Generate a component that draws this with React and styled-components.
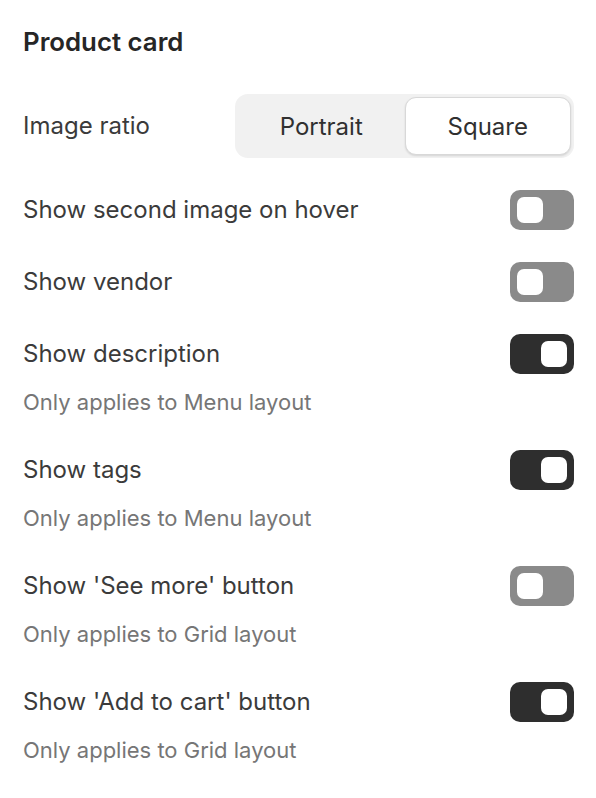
import React, { useState } from 'react';
import styled, { createGlobalStyle } from 'styled-components';

const GlobalStyle = createGlobalStyle`
  body {
    margin: 0;
    background: #ffffff;
    font-family: Inter, "Noto Sans", sans-serif;
    -webkit-font-smoothing: antialiased;
  }
`;

const Panel = styled.div`
  padding: 28px 22px 40px 23px;
  display: flex;
  flex-direction: column;
`;

const Title = styled.h2`
  margin: 0 0 38px;
  font-size: 25.8px;
  line-height: 28px;
  font-weight: 600;
  color: #262626;
`;

const List = styled.div`
  display: flex;
  flex-direction: column;
  gap: 32px;
`;

const Row = styled.div`
  display: flex;
  align-items: center;
  justify-content: space-between;
  min-height: 40px;
`;

const Label = styled.span`
  font-size: 24px;
  line-height: 28px;
  color: #3b3b3b;
`;

const Hint = styled.div`
  padding: 16px 0 4px;
  font-size: 22px;
  line-height: 24px;
  color: #767676;
`;

const Segmented = styled.div`
  display: grid;
  grid-template-columns: 1fr 1fr;
  width: 339px;
  height: 64px;
  padding: 3px;
  box-sizing: border-box;
  background: #f1f1f1;
  border-radius: 13px;
`;

const Segment = styled.button`
  border: 1px solid ${p => (p.active ? '#d8d8d8' : 'transparent')};
  background: ${p => (p.active ? '#ffffff' : 'transparent')};
  box-shadow: ${p => (p.active ? '0 1px 2px rgba(0,0,0,0.12)' : 'none')};
  border-radius: 11px;
  font-family: inherit;
  font-size: 24px;
  color: #303030;
  cursor: pointer;
  padding: 0;
`;

const Track = styled.button`
  width: 64px;
  height: 40px;
  padding: 7px;
  box-sizing: border-box;
  border: none;
  border-radius: 10px;
  background: ${p => (p.on ? '#2e2e2e' : '#8a8a8a')};
  display: flex;
  justify-content: ${p => (p.on ? 'flex-end' : 'flex-start')};
  align-items: center;
  cursor: pointer;
`;

const Knob = styled.span`
  width: 26px;
  height: 26px;
  border-radius: 7px;
  background: #ffffff;
`;

const settings = [
  { label: 'Show second image on hover', on: false },
  { label: 'Show vendor', on: false },
  { label: 'Show description', on: true, hint: 'Only applies to Menu layout' },
  { label: 'Show tags', on: true, hint: 'Only applies to Menu layout' },
  { label: "Show 'See more' button", on: false, hint: 'Only applies to Grid layout' },
  { label: "Show 'Add to cart' button", on: true, hint: 'Only applies to Grid layout' },
];

function Toggle({ on, onClick }) {
  return (
    <Track on={on ? 1 : 0} onClick={onClick}>
      <Knob />
    </Track>
  );
}

export default function App() {
  const [ratio, setRatio] = useState('Square');
  const [values, setValues] = useState(settings.map(s => s.on));

  const flip = i => setValues(v => v.map((x, j) => (j === i ? !x : x)));

  return (
    <>
      <GlobalStyle />
      <Panel>
        <Title>Product card</Title>
        <List>
          <Row>
            <Label>Image ratio</Label>
            <Segmented>
              {['Portrait', 'Square'].map(r => (
                <Segment key={r} active={ratio === r ? 1 : 0} onClick={() => setRatio(r)}>
                  {r}
                </Segment>
              ))}
            </Segmented>
          </Row>
          {settings.map((s, i) => (
            <div key={s.label}>
              <Row>
                <Label>{s.label}</Label>
                <Toggle on={values[i]} onClick={() => flip(i)} />
              </Row>
              {s.hint && <Hint>{s.hint}</Hint>}
            </div>
          ))}
        </List>
      </Panel>
    </>
  );
}
